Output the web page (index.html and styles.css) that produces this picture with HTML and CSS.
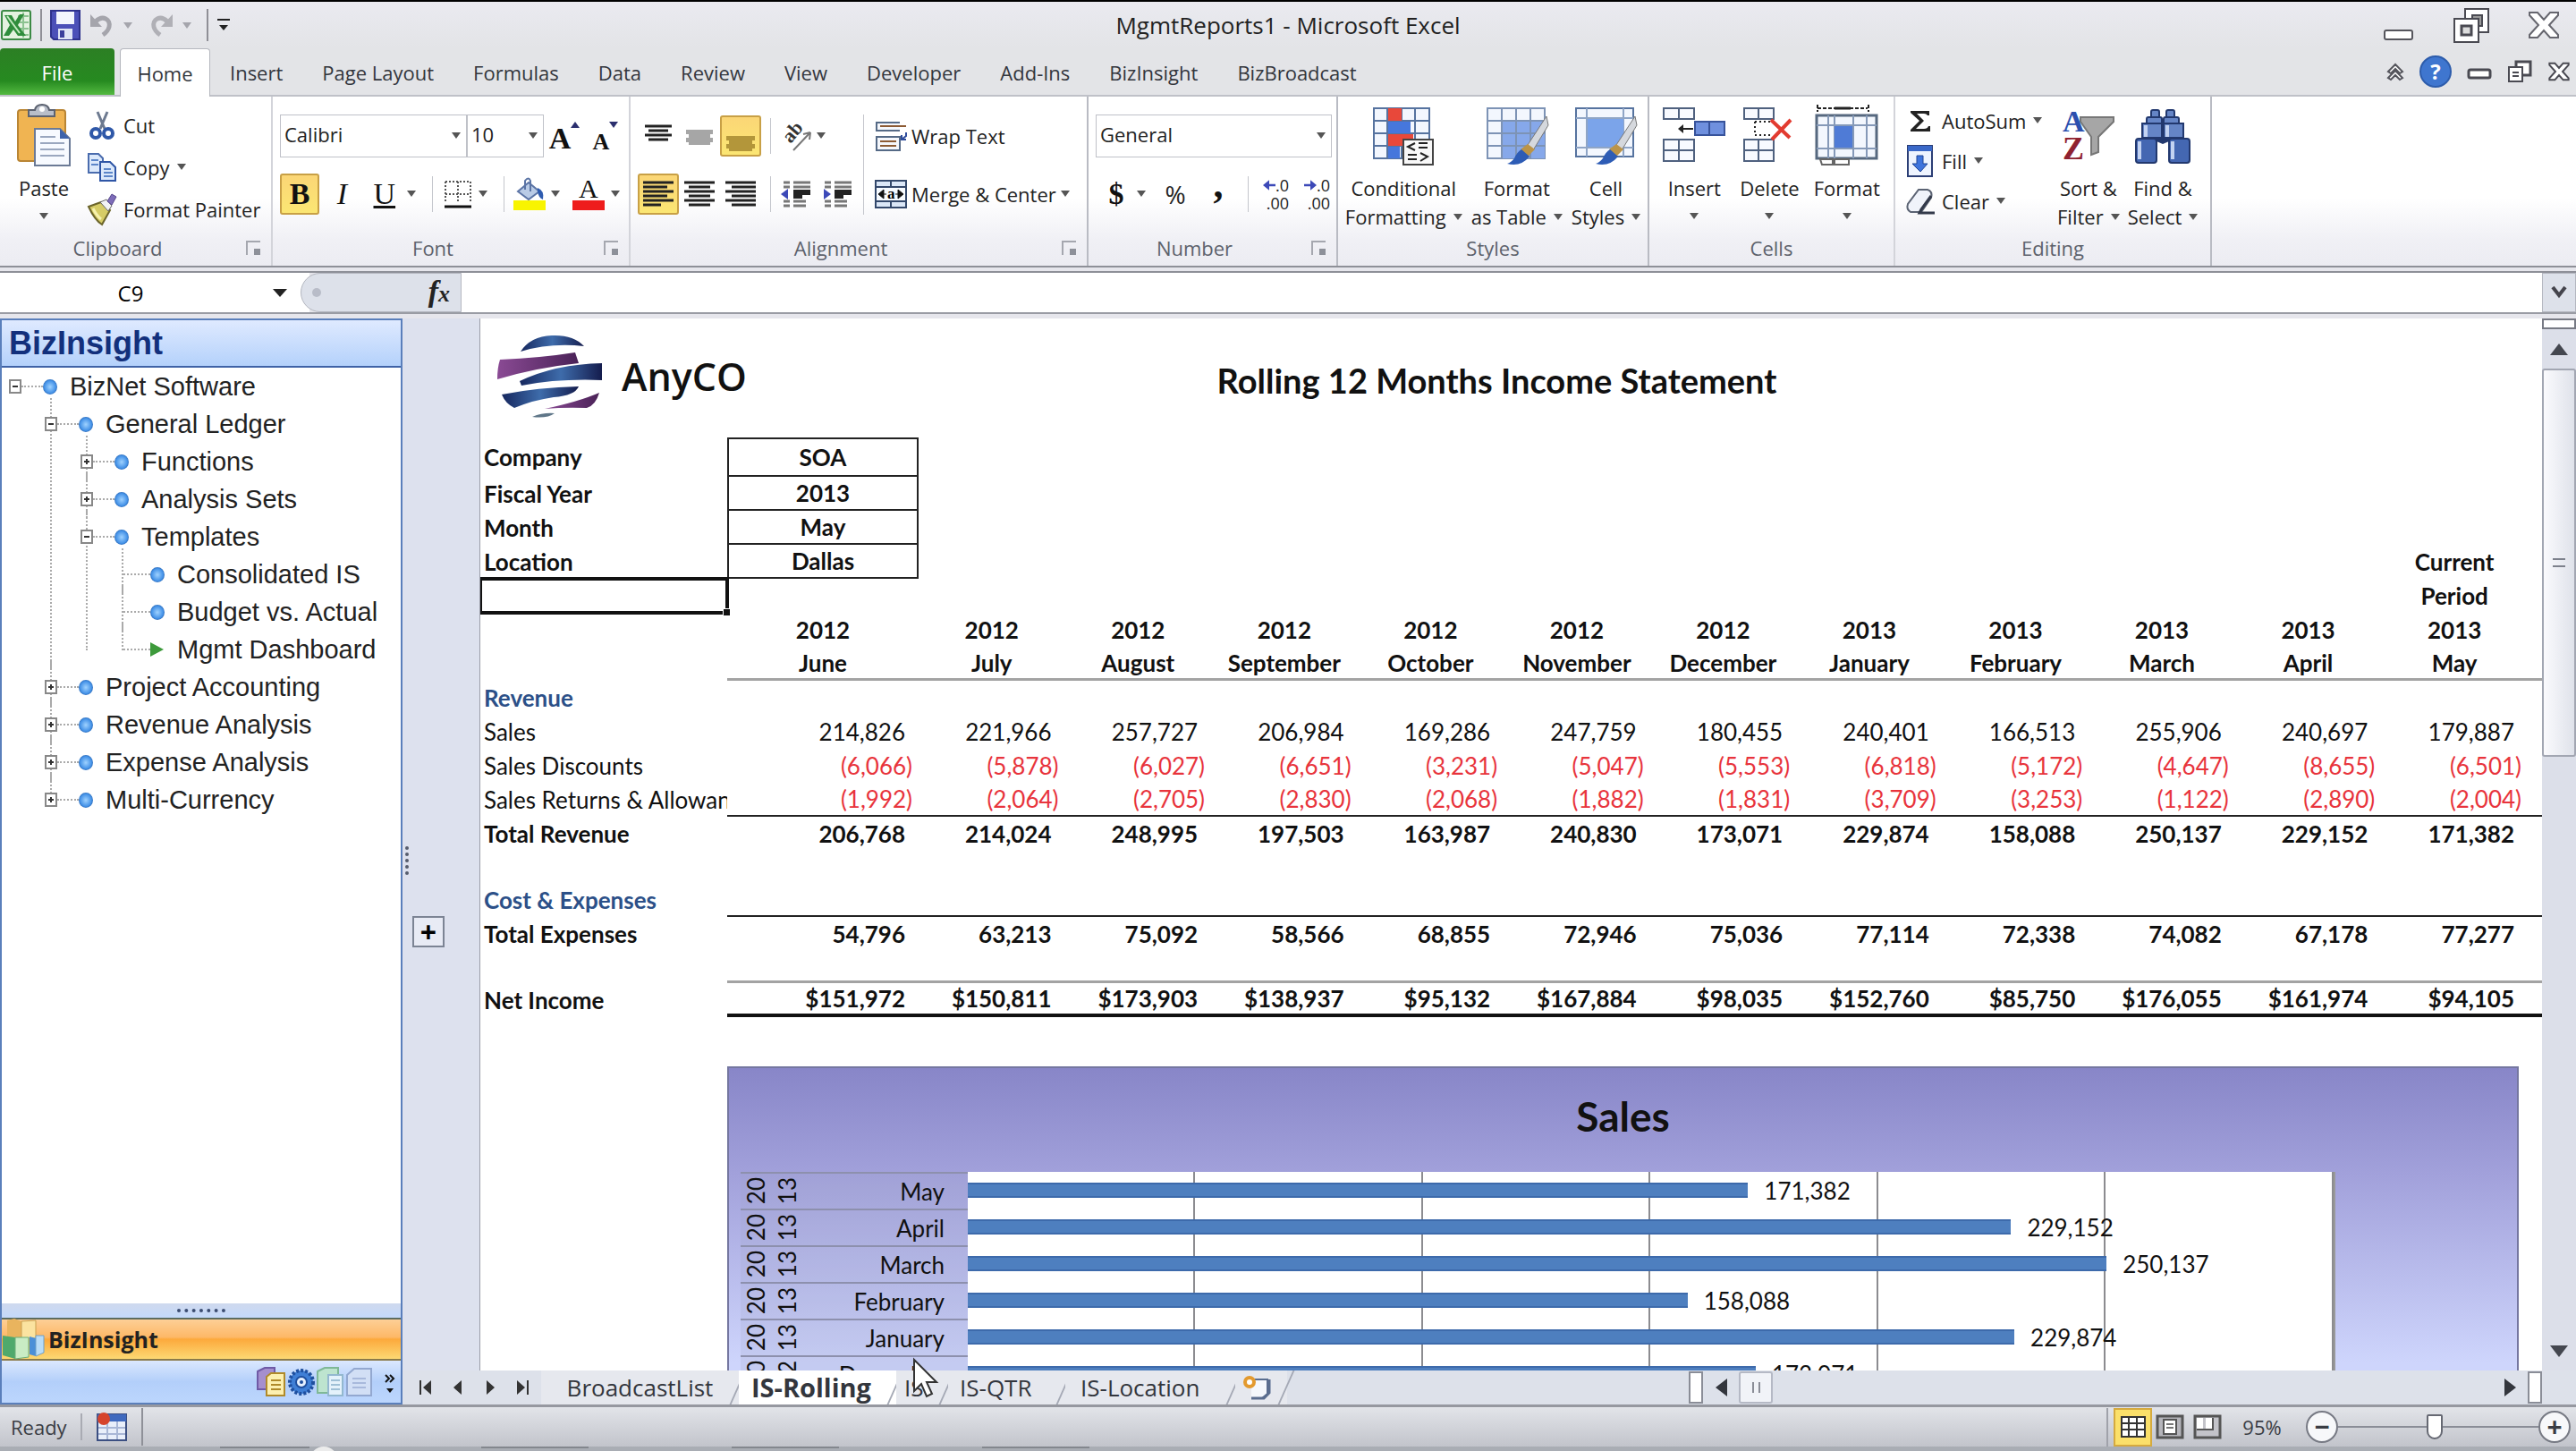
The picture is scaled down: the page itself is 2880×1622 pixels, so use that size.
FILE: index.html
```
<!DOCTYPE html>
<html lang="en">
<head>
  <meta charset="UTF-8">
  <meta name="viewport" content="width=device-width, initial-scale=1.0">
  <title>MgmtReports1 - Microsoft Excel</title>
  <link rel="stylesheet" href="styles.css">
</head>
<body>
  <!-- Title bar -->
  <header class="title-bar">
    <div class="quick-access">
      <svg width="36" height="36" viewBox="0 0 36 36"><rect x="2" y="2" width="32" height="32" rx="2" fill="#e4f2e0" stroke="#3c8a45" stroke-width="2"/><path d="M20 8h12M20 15h12M20 22h12M20 29h12M26 4v28" stroke="#8cc290" stroke-width="2"/><path d="M5 7h8l4 7 5-8h5l-7 12 9 12h-9l-5-7-5 7H4l7-12z" fill="#2f8d3c"/><path d="M8 8l14 19" stroke="#c5ebc2" stroke-width="2"/></svg>
      <i class="qa-sep"></i>
      <button aria-label="Save"><svg width="34" height="34" viewBox="0 0 34 34"><path d="M1 1h32v32H4l-3-3z" fill="#4b50b8" stroke="#2d318c" stroke-width="2"/><rect x="7" y="2" width="20" height="14" fill="#f2f5fd"/><rect x="9" y="21" width="16" height="12" fill="#dfe5f5"/><rect x="11" y="23" width="5" height="8" fill="#3b409c"/></svg></button>
      <button aria-label="Undo"><svg width="30" height="30" viewBox="0 0 30 30"><path d="M8 11c8-8 17-2 15 6-1 4-4 7-7 9" fill="none" stroke="#a5a5ac" stroke-width="5"/><path d="M2 3v14h13z" fill="#a5a5ac"/></svg></button>
      <i class="caret pale"></i>
      <button aria-label="Redo"><svg width="30" height="30" viewBox="0 0 30 30"><path d="M22 11c-8-8-17-2-15 6 1 4 4 7 7 9" fill="none" stroke="#b0b0b6" stroke-width="5"/><path d="M28 3v14H15z" fill="#b0b0b6"/></svg></button>
      <i class="caret pale"></i>
      <i class="qa-sep"></i>
      <button aria-label="Customize"><svg width="16" height="16" viewBox="0 0 16 16"><path d="M1 2h14" stroke="#222" stroke-width="2"/><path d="M3 8h10l-5 6z" fill="#222"/></svg></button>
    </div>
    <h1>MgmtReports1 - Microsoft Excel</h1>
    <div class="window-buttons">
      <button aria-label="Minimize"><svg width="36" height="40" viewBox="0 0 36 40"><rect x="2" y="26" width="31" height="10" rx="2" fill="#fff" stroke="#55555c" stroke-width="2"/></svg></button>
      <button aria-label="Restore"><svg width="42" height="42" viewBox="0 0 42 42"><rect x="14" y="3" width="26" height="26" fill="#fff" stroke="#4a4a52" stroke-width="2"/><rect x="22" y="10" width="11" height="12" fill="#999" stroke="#4a4a52" stroke-width="2"/><rect x="2" y="14" width="27" height="26" fill="#fff" stroke="#4a4a52" stroke-width="2"/><rect x="10" y="22" width="11" height="10" fill="#ddd" stroke="#4a4a52" stroke-width="3"/></svg></button>
      <button aria-label="Close"><svg width="36" height="36" viewBox="0 0 36 36"><path d="M2 4h9l7 8 7-8h9v3l-10 11 10 11v3h-9l-7-8-7 8H2v-3l10-11L2 7z" fill="#fff" stroke="#66666e" stroke-width="2"/></svg></button>
    </div>
  </header>

  <!-- Ribbon tabs -->
  <nav class="ribbon-tabs">
    <a href="#" class="file">File</a>
    <a href="#" class="active">Home</a>
    <a href="#">Insert</a>
    <a href="#">Page Layout</a>
    <a href="#">Formulas</a>
    <a href="#">Data</a>
    <a href="#">Review</a>
    <a href="#">View</a>
    <a href="#">Developer</a>
    <a href="#">Add-Ins</a>
    <a href="#">BizInsight</a>
    <a href="#">BizBroadcast</a>
    <div class="book-buttons">
      <button aria-label="Minimize ribbon"><svg width="20" height="20" viewBox="0 0 20 20"><path d="M2 10l8-8 8 8-3 2-5-5-5 5zM2 17l8-8 8 8-3 2-5-5-5 5z" fill="#fff" stroke="#55555c" stroke-width="2"/></svg></button>
      <button aria-label="Help" class="help">?</button>
      <button aria-label="Minimize window"><svg width="28" height="20" viewBox="0 0 28 20"><rect x="2" y="8" width="24" height="9" rx="2" fill="#fff" stroke="#4a4a52" stroke-width="3"/></svg></button>
      <button aria-label="Restore window"><svg width="28" height="26" viewBox="0 0 28 26"><rect x="10" y="2" width="16" height="15" fill="#fff" stroke="#4a4a52" stroke-width="3"/><rect x="2" y="8" width="15" height="16" fill="#fff" stroke="#4a4a52" stroke-width="2"/><path d="M6 14h7M6 18h7" stroke="#4a4a52" stroke-width="2"/></svg></button>
      <button aria-label="Close window"><svg width="26" height="24" viewBox="0 0 36 36"><path d="M2 4h9l7 8 7-8h9v3l-10 11 10 11v3h-9l-7-8-7 8H2v-3l10-11L2 7z" fill="#fff" stroke="#4a4a52" stroke-width="3"/></svg></button>
    </div>
  </nav>

  <!-- Ribbon -->
  <section class="ribbon">
    <div class="group clipboard">
      <div class="group-body">
        <button class="big">
          <svg width="62" height="70" viewBox="0 0 62 70"><rect x="2" y="7" width="53" height="57" rx="3" fill="#f0b452" stroke="#b98534" stroke-width="2"/><path d="M14 14V7h7q1-6 8-6t8 6h6v7z" fill="#b9bec9" stroke="#5c6270" stroke-width="2"/><circle cx="29" cy="6" r="3" fill="#fff"/><path d="M21 28h28l11 11v30H21z" fill="#f7faff" stroke="#6b7a96" stroke-width="2"/><path d="M49 28v11h11z" fill="#3e63ab"/><path d="M27 37h17M27 44h27M27 51h27M27 58h27" stroke="#9aa7bf" stroke-width="2"/></svg>
          <span>Paste</span>
          <i class="caret"></i>
        </button>
        <div class="stack">
          <button><svg width="32" height="32" viewBox="0 0 32 32"><path d="M11 1l8 19M22 1l-8 19" stroke="#6d7a90" stroke-width="3"/><circle cx="9" cy="25" r="5" fill="none" stroke="#2f58a8" stroke-width="4"/><circle cx="23" cy="25" r="5" fill="none" stroke="#2f58a8" stroke-width="4"/></svg>Cut</button>
          <button><svg width="32" height="32" viewBox="0 0 32 32"><path d="M1 1h11l5 5v16H1z" fill="#dce9fb" stroke="#4a6cae" stroke-width="2"/><path d="M14 10h11l6 6v15H14z" fill="#dce9fb" stroke="#2f56a6" stroke-width="2"/><path d="M4 8h8M4 13h8M18 18h8M18 22h10M18 26h10" stroke="#5c86c9" stroke-width="2"/></svg>Copy<i class="caret"></i></button>
          <button><svg width="32" height="36" viewBox="0 0 32 36"><path d="M1 15l14-5 10 9-9 16Q8 30 1 15z" fill="#d6cc66" stroke="#6b642a" stroke-width="2"/><path d="M6 17q4 8 9 12" stroke="#f6f1ae" stroke-width="3" fill="none"/><path d="M14 10l7-3 6 7-4 6z" fill="#f2f2f4" stroke="#666"/><path d="M22 9l5-8 5 3-5 9z" fill="#7d6cb8" stroke="#54458c"/></svg>Format Painter</button>
        </div>
      </div>
      <footer>Clipboard<i class="launcher"></i></footer>
    </div>

    <div class="group font">
      <div class="group-body rows">
        <div class="row">
          <label class="combo name"><select aria-label="Font"><option>Calibri</option></select><i class="caret"></i></label>
          <label class="combo size"><select aria-label="Font size"><option>10</option></select><i class="caret"></i></label>
          <button class="tool serif grow" aria-label="Increase font size">A<i class="up"></i></button>
          <button class="tool serif shrink" aria-label="Decrease font size">A<i class="down"></i></button>
        </div>
        <div class="row">
          <button class="tool serif on"><b>B</b></button>
          <button class="tool serif"><em>I</em></button>
          <button class="tool serif"><u>U</u></button>
          <i class="caret"></i>
          <i class="sep"></i>
          <button class="tool" aria-label="Borders"><svg width="32" height="32" viewBox="0 0 32 32"><path d="M2 2h28M2 16h28M2 2v24M16 2v24M30 2v24" stroke="#555" stroke-width="2" stroke-dasharray="2 2"/><path d="M1 30h30" stroke="#111" stroke-width="3"/></svg></button>
          <i class="caret"></i>
          <i class="sep"></i>
          <button class="tool" aria-label="Fill color"><svg width="38" height="38" viewBox="0 0 38 38"><path d="M6 16L18 6l12 10-12 9z" fill="#b9cbe6" stroke="#5b74a5" stroke-width="2"/><path d="M14 14V4q4-5 6 0v12" fill="none" stroke="#5b74a5" stroke-width="2"/><path d="M28 12q8 3 6 13-5-2-6-9z" fill="#2f5cb0"/><rect x="1" y="26" width="36" height="11" fill="#f8f400"/></svg></button>
          <i class="caret"></i>
          <button class="tool fontcolor serif" aria-label="Font color">A<i class="red"></i></button>
          <i class="caret"></i>
        </div>
      </div>
      <footer>Font<i class="launcher"></i></footer>
    </div>

    <div class="group align">
      <div class="group-body">
        <div class="rows">
          <div class="row">
            <button class="tool" aria-label="Top align"><svg width="32" height="32" viewBox="0 0 32 32"><path d="M1 5h30M5 10h22M1 15h30M5 20h22" stroke="#222" stroke-width="3"/></svg></button>
            <button class="tool" aria-label="Middle align"><svg width="32" height="32" viewBox="0 0 32 32"><path d="M1 9h30v5h-3v4h3v5H28v3H4v-3H1v-5h3v-4H1z" fill="#a6a6a6"/></svg></button>
            <button class="tool on" aria-label="Bottom align"><svg width="34" height="36" viewBox="0 0 34 36"><path d="M1 18h32v5h-3v4h3v5h-3v3H4v-3H1v-5h3v-4H1z" fill="#b3963a"/></svg></button>
            <i class="sep"></i>
            <button class="tool" aria-label="Orientation"><svg width="36" height="34" viewBox="0 0 36 34"><text transform="translate(12 26) rotate(-50)" font-family="Liberation Serif" font-weight="bold" font-size="22" fill="#333">ab</text><path d="M15 33L34 13M34 13l-8 2M34 13l-1 8" stroke="#777" stroke-width="2" fill="none"/></svg></button>
            <i class="caret"></i>
          </div>
          <div class="row">
            <button class="tool on" aria-label="Align left"><svg width="34" height="32" viewBox="0 0 34 32"><path d="M0 3h34M0 8h27M0 13h34M0 18h27M0 23h34M0 28h20" stroke="#222" stroke-width="3"/></svg></button>
            <button class="tool" aria-label="Center"><svg width="34" height="32" viewBox="0 0 34 32"><path d="M0 3h34M5 8h24M0 13h34M5 18h24M0 23h34M5 28h24" stroke="#222" stroke-width="3"/></svg></button>
            <button class="tool" aria-label="Align right"><svg width="34" height="32" viewBox="0 0 34 32"><path d="M0 3h34M7 8h27M0 13h34M7 18h27M0 23h34M7 28h27" stroke="#222" stroke-width="3"/></svg></button>
            <i class="sep"></i>
            <button class="tool" aria-label="Decrease indent"><svg width="34" height="32" viewBox="0 0 34 32"><path d="M3 3h7M14 3h19M3 8h7M14 8h19M3 24h7M3 29h7M14 24h14M14 29h14" stroke="#777" stroke-width="3"/><path d="M14 11h19v6H24v4H14z" fill="#222"/><path d="M0 16l8-6v12z" fill="#3c49b8"/></svg></button>
            <button class="tool" aria-label="Increase indent"><svg width="34" height="32" viewBox="0 0 34 32"><path d="M3 3h7M14 3h19M3 8h7M14 8h19M3 24h7M3 29h7M14 24h14M14 29h14" stroke="#777" stroke-width="3"/><path d="M14 11h19v6H24v4H14z" fill="#222"/><path d="M10 16l-8-6v12z" fill="#3c49b8"/></svg></button>
          </div>
        </div>
        <i class="sep tall"></i>
        <div class="rows wide">
          <button class="row"><svg width="36" height="36" viewBox="0 0 36 36"><path d="M28 3H2v9h26M2 19h26v15H2z" fill="#f5f7fb" stroke="#556a86" stroke-width="2"/><path d="M6 7h29M6 24h18M6 29h18" stroke="#8c5a33" stroke-width="2"/><path d="M35 14v4l-5 4M30 17v5h5" stroke="#2f4d9c" stroke-width="2" fill="none"/></svg>Wrap Text</button>
          <button class="row"><svg width="36" height="32" viewBox="0 0 36 32"><rect x="1" y="1" width="34" height="30" fill="#dbe7f7" stroke="#33486b" stroke-width="2"/><path d="M1 8h34M1 24h34M18 1v7M18 24v7" stroke="#33486b" stroke-width="2"/><rect x="2" y="9" width="32" height="14" fill="#f7fbff"/><path d="M4 16l6-5v10zM32 16l-6-5v10zM9 16h4M23 16h4" fill="#111" stroke="#111"/><text x="14" y="21" font-family="Liberation Serif" font-weight="bold" font-size="17">a</text></svg>Merge &amp; Center<i class="caret"></i></button>
        </div>
      </div>
      <footer>Alignment<i class="launcher"></i></footer>
    </div>

    <div class="group number">
      <div class="group-body rows">
        <div class="row">
          <label class="combo format"><select aria-label="Number format"><option>General</option></select><i class="caret"></i></label>
        </div>
        <div class="row">
          <button class="tool serif"><b>$</b></button>
          <i class="caret"></i>
          <button class="tool pct">%</button>
          <button class="tool serif comma"><b>,</b></button>
          <i class="sep"></i>
          <button class="tool decimals"><span><svg width="14" height="14" viewBox="0 0 12 12"><path d="M0 6l6-5v4h6v2H6v4z" fill="#3c49b8"/></svg>.0</span><span>.00</span></button>
          <button class="tool decimals"><span><svg width="14" height="14" viewBox="0 0 12 12"><path d="M12 6L6 1v4H0v2h6v4z" fill="#3c49b8"/></svg>.0</span><span>.00</span></button>
        </div>
      </div>
      <footer>Number<i class="launcher"></i></footer>
    </div>

    <div class="group styles">
      <div class="group-body">
        <button class="big">
          <svg width="70" height="70" viewBox="0 0 70 70"><rect x="2" y="5" width="62" height="56" fill="#f3f7fe" stroke="#56739f" stroke-width="2"/><path d="M2 19h62M2 33h62M2 47h62M17 5v56M33 5v56M48 5v56" stroke="#56739f" stroke-width="2"/><path d="M18 5h15v14H18zM18 34h28v13H18z" fill="#e8483a"/><path d="M18 20h25v13H18zM18 48h13v13H18z" fill="#4677dc"/><rect x="35" y="40" width="33" height="28" fill="#f8f8f8" stroke="#444" stroke-width="2"/><path d="M48 44l-8 4 8 4M52 44h10M52 49h10M40 57h10M40 62h10M54 55l8 4-8 5" fill="none" stroke="#222" stroke-width="2"/></svg>
          <span>Conditional</span><span>Formatting<i class="caret"></i></span>
        </button>
        <button class="big">
          <svg width="70" height="70" viewBox="0 0 70 70"><rect x="2" y="5" width="64" height="56" fill="#f3f7fe" stroke="#7d93b5" stroke-width="2"/><rect x="18" y="19" width="48" height="42" fill="#86a8ea"/><path d="M2 19h64M2 33h64M2 47h64M18 5v56M34 5v56M50 5v56" stroke="#7d93b5" stroke-width="2"/><path d="M68 14L47 46l6 6 17-28z" fill="#d5d8dd" stroke="#777"/><path d="M47 45l-8 6 8 8 8-8z" fill="#bb9448"/><path d="M40 51q-5 3-8 10-4 5-8 6 15 4 25-8z" fill="#2d5cb5"/></svg>
          <span>Format</span><span>as Table<i class="caret"></i></span>
        </button>
        <button class="big">
          <svg width="70" height="70" viewBox="0 0 70 70"><rect x="2" y="5" width="64" height="54" fill="#f3f7fe" stroke="#56739f" stroke-width="2"/><path d="M2 16h64M14 5v54M55 5v54M2 49h64" stroke="#8fa5c6" stroke-width="2"/><rect x="15" y="17" width="40" height="31" fill="#7ba4ea"/><path d="M68 14L47 46l6 6 17-28z" fill="#d5d8dd" stroke="#777"/><path d="M47 45l-8 6 8 8 8-8z" fill="#bb9448"/><path d="M40 51q-5 3-8 10-4 5-8 6 15 4 25-8z" fill="#2d5cb5"/></svg>
          <span>Cell</span><span>Styles<i class="caret"></i></span>
        </button>
      </div>
      <footer>Styles</footer>
    </div>

    <div class="group cells">
      <div class="group-body">
        <button class="big">
          <svg width="70" height="70" viewBox="0 0 70 70"><path d="M1 5h34v12H1zM18 5v12M1 40h34v24H1zM1 52h34M18 40v24" fill="#f8faff" stroke="#4f617f" stroke-width="2"/><rect x="36" y="20" width="33" height="15" fill="#6f90de" stroke="#37539b" stroke-width="2"/><path d="M52 20v15" stroke="#37539b" stroke-width="2"/><path d="M20 28h14" stroke="#222" stroke-width="2"/><path d="M17 28l6-5v10z" fill="#222"/></svg>
          <span>Insert</span><i class="caret"></i>
        </button>
        <button class="big">
          <svg width="62" height="70" viewBox="0 0 62 70"><path d="M3 5h33v12H3zM19 5v12M3 40h33v24H3zM3 52h33M19 40v24" fill="#f8faff" stroke="#4f617f" stroke-width="2"/><path d="M15 20h18M15 35h18M15 20v15" stroke="#222" stroke-width="2" stroke-dasharray="2 3"/><path d="M33 18l21 20M55 18L34 40" stroke="#e23b30" stroke-width="4"/></svg>
          <span>Delete</span><i class="caret"></i>
        </button>
        <button class="big">
          <svg width="72" height="70" viewBox="0 0 72 70"><path d="M3 1v8M60 1v8M3 5h56" stroke="#222" stroke-width="2" stroke-dasharray="4 2"/><path d="M22 5h18" stroke="#222" stroke-width="3"/><rect x="2" y="13" width="67" height="48" fill="#f3f7fe" stroke="#56687f" stroke-width="3"/><path d="M2 24h67M2 50h67M15 13v48M43 13v48M58 13v48M22 13v48" stroke="#8599b8" stroke-width="2"/><rect x="22" y="25" width="20" height="24" fill="#4f7bd6"/><path d="M6 62h14v6H8zM22 62h16v6H22z" fill="#fff" stroke="#666" stroke-width="2"/></svg>
          <span>Format</span><i class="caret"></i>
        </button>
      </div>
      <footer>Cells</footer>
    </div>

    <div class="group editing">
      <div class="group-body">
        <div class="stack">
          <button><svg width="32" height="32" viewBox="0 0 32 32"><path d="M5 5h21v5h-2q-1-2-4-2h-8l8 8-9 9h9q4 0 5-3h2v6H5v-2l10-10L5 7z" fill="#222"/></svg>AutoSum<i class="caret"></i></button>
          <button><svg width="32" height="36" viewBox="0 0 32 36"><rect x="2" y="1" width="27" height="34" fill="#eef4ff" stroke="#2b3e75" stroke-width="2"/><rect x="2" y="1" width="27" height="6" fill="#3a68c8"/><path d="M12 12h7v9h5l-8 9-9-9h5z" fill="#3e74dc" stroke="#1f4495"/></svg>Fill<i class="caret"></i></button>
          <button><svg width="32" height="30" viewBox="0 0 32 30"><path d="M14 2h10q6 2 4 9L17 27H5q-5-3-3-9z" fill="#f0f3fa" stroke="#5b6373" stroke-width="2"/><path d="M28 9L17 24l-2 4h17" fill="none" stroke="#333a4a" stroke-width="3"/></svg>Clear<i class="caret"></i></button>
        </div>
        <button class="big">
          <svg width="62" height="70" viewBox="0 0 62 70"><path d="M22 15h37v5L42 37v17l-8 3V37L22 20z" fill="#a6a6a6" stroke="#777" stroke-width="2"/><text x="2" y="31" font-family="Liberation Serif" font-weight="bold" font-size="34" fill="#2b4fae">A</text><text x="2" y="62" font-family="Liberation Serif" font-weight="bold" font-size="36" fill="#8f2230">Z</text></svg>
          <span>Sort &amp;</span><span>Filter<i class="caret"></i></span>
        </button>
        <button class="big">
          <svg width="64" height="70" viewBox="0 0 64 70"><g stroke="#22386e" stroke-width="2" fill="#6585c6"><rect x="19" y="7" width="9" height="9" rx="2"/><rect x="36" y="7" width="9" height="9" rx="2"/><rect x="14" y="15" width="17" height="8" rx="2"/><rect x="33" y="15" width="17" height="8" rx="2"/><rect x="9" y="22" width="22" height="16"/><rect x="33" y="22" width="22" height="16"/><rect x="2" y="39" width="23" height="27" rx="3" fill="#4467b2"/><rect x="39" y="39" width="23" height="27" rx="3" fill="#4467b2"/></g><path d="M25 38h14v4l-7 3-7-3z" fill="#22386e"/><path d="M6 42v20M43 42v20M13 24v13M37 24v13" stroke="#c3d3f2" stroke-width="4"/></svg>
          <span>Find &amp;</span><span>Select<i class="caret"></i></span>
        </button>
      </div>
      <footer>Editing</footer>
    </div>
  </section>

  <!-- Formula bar -->
  <section class="formula-bar">
    <input class="name-box" type="text" value="C9" aria-label="Name box">
    <button class="name-drop" aria-label="Names"><i class="caret dark"></i></button>
    <div class="fx"><i class="knob"></i><span>f<small>x</small></span></div>
    <input class="formula" type="text" aria-label="Formula">
    <button class="expand" aria-label="Expand formula bar"><svg width="18" height="18" viewBox="0 0 18 18"><path d="M2 3l7 9 7-9" fill="none" stroke="#44444c" stroke-width="4"/></svg></button>
  </section>

  <main class="workspace">
    <!-- BizInsight task pane -->
    <aside class="pane">
      <h2>BizInsight</h2>
      <ul class="tree">
        <li><div class="node open"><i class="box"></i><i class="dash"></i><i class="dot"></i>BizNet Software</div>
          <ul>
            <li><div class="node open"><i class="box"></i><i class="dash"></i><i class="dot"></i>General Ledger</div>
              <ul>
                <li><div class="node"><i class="box"></i><i class="dash"></i><i class="dot"></i>Functions</div></li>
                <li><div class="node"><i class="box"></i><i class="dash"></i><i class="dot"></i>Analysis Sets</div></li>
                <li><div class="node open"><i class="box"></i><i class="dash"></i><i class="dot"></i>Templates</div>
                  <ul>
                    <li><div class="node leaf"><i class="dash"></i><i class="dot"></i>Consolidated IS</div></li>
                    <li><div class="node leaf"><i class="dash"></i><i class="dot"></i>Budget vs. Actual</div></li>
                    <li><div class="node leaf"><i class="dash"></i><i class="play"></i>Mgmt Dashboard</div></li>
                  </ul>
                </li>
              </ul>
            </li>
            <li><div class="node"><i class="box"></i><i class="dash"></i><i class="dot"></i>Project Accounting</div></li>
            <li><div class="node"><i class="box"></i><i class="dash"></i><i class="dot"></i>Revenue Analysis</div></li>
            <li><div class="node"><i class="box"></i><i class="dash"></i><i class="dot"></i>Expense Analysis</div></li>
            <li><div class="node"><i class="box"></i><i class="dash"></i><i class="dot"></i>Multi-Currency</div></li>
          </ul>
        </li>
      </ul>
      <div class="splitter"><i></i></div>
      <button class="pane-tab"><svg width="48" height="46" viewBox="0 0 48 46"><path d="M6 2l8-2 8 3v18H6z" fill="#e9b45e"/><path d="M22 3l16-1v20H22z" fill="#fbe3a0" stroke="#c9a050"/><path d="M1 19l14 2v24L1 41z" fill="#4fa96c"/><path d="M15 21h15v22l-15 2z" fill="#c9ecc4" stroke="#6bae78"/><path d="M31 20l7 2v20l-7-2z" fill="#4b8fd8"/><path d="M38 19h9v19l-9 4z" fill="#b9dcf8" stroke="#6f9fc8"/></svg>BizInsight</button>
      <div class="pane-icons">
        <svg width="34" height="34" viewBox="0 0 34 34"><path d="M2 5l8-4h11v24H2z" fill="#a58fce" stroke="#6f5aa6" stroke-width="2"/><path d="M12 11l5-4h15v25H12z" fill="#fdf0b0" stroke="#b08a2a" stroke-width="2"/><path d="M17 15h11M17 20h11M17 25h11" stroke="#b08a2a" stroke-width="2"/></svg>
        <svg width="32" height="32" viewBox="0 0 32 32"><circle cx="16" cy="16" r="13" fill="#3f7fd6" stroke="#1f4f9e" stroke-width="4" stroke-dasharray="3 2"/><circle cx="16" cy="16" r="6" fill="#e7f1ff" stroke="#1f4f9e" stroke-width="2"/><circle cx="16" cy="16" r="2" fill="#1f4f9e"/></svg>
        <svg width="32" height="34" viewBox="0 0 32 34"><path d="M1 5l8-4h15v28H1z" fill="#bde4cf" stroke="#7fb897" stroke-width="2"/><path d="M13 9h16v23H13z" fill="#e4f2fb" stroke="#93b8cf" stroke-width="2"/><path d="M16 15h10M16 20h10M16 25h10" stroke="#9fc0d6" stroke-width="2"/></svg>
        <svg width="30" height="34" viewBox="0 0 30 34"><path d="M1 9l8-7h19v30H1z" fill="#d2dff5" stroke="#93a8d0" stroke-width="2"/><path d="M7 13h15M7 18h15M7 23h15" stroke="#a8b9dc" stroke-width="2"/></svg>
        <svg class="more" width="12" height="34" viewBox="0 0 12 34"><path d="M1 9l4 4-4 4M6 9l4 4-4 4" fill="none" stroke="#111" stroke-width="2"/><path d="M2 24h8l-4 5z" fill="#111"/></svg>
      </div>
    </aside>

    <section class="book">
      <div class="view">
        <div class="outline"><i class="grip"></i><button aria-label="Show detail">+</button></div>
        <div class="sheet">
          <header class="report-head">
            <div class="brand">
              <svg width="120" height="96" viewBox="0 0 120 96"><defs><linearGradient id="blue"><stop offset="0" stop-color="#16275e"/><stop offset=".5" stop-color="#3e6cab"/><stop offset="1" stop-color="#141c4d"/></linearGradient><linearGradient id="plum"><stop offset="0" stop-color="#8a4a94"/><stop offset="1" stop-color="#4a2257"/></linearGradient></defs><path d="M27 20Q38 3 62 2 86 1 98 14 60 10 27 20z" fill="url(#blue)"/><path d="M4 29Q50 27 88 21l4 12Q44 38 1 51 1 38 4 29z" fill="url(#plum)"/><path d="M26 53q40-19 92-20v19Q70 50 28 58z" fill="url(#blue)"/><path d="M6 68q40-8 86-9-4 10-28 12-22 3-44 12Q10 78 6 68z" fill="url(#blue)"/><path d="M54 84q38-8 61-18-4 14-14 17-24-1-47 1z" fill="url(#plum)"/><path d="M40 93q12-5 25-4-8 6-25 4z" fill="#5f7688"/></svg>
              <strong>AnyCO</strong>
            </div>
            <h3>Rolling 12 Months Income Statement</h3>
          </header>
          <table class="report">
            <colgroup><col class="c-label"><col class="c-first"><col span="11"><col class="c-end"></colgroup>
            <tbody id="reportRows"></tbody>
          </table>
          <div class="chart">
            <h3>Sales</h3>
            <div class="plot-wrap">
              <div class="cats" id="cats"></div>
              <div class="plot" id="plot"></div>
            </div>
          </div>
        </div>
        <div class="vscroll">
          <i class="vsplit"></i>
          <button aria-label="Scroll up"><i class="tri up"></i></button>
          <div class="vtrack"><div class="vthumb"><i></i></div></div>
          <button aria-label="Scroll down"><i class="tri down"></i></button>
        </div>
      </div>

      <!-- Sheet tabs -->
      <div class="tab-row">
        <div class="tab-nav">
          <button aria-label="First sheet"><svg width="16" height="18" viewBox="0 0 16 18"><path d="M2 1v16" stroke="#333" stroke-width="2"/><path d="M14 1v16L5 9z" fill="#333"/></svg></button>
          <button aria-label="Previous sheet"><svg width="16" height="18" viewBox="0 0 16 18"><path d="M12 1v16L3 9z" fill="#333"/></svg></button>
          <button aria-label="Next sheet"><svg width="16" height="18" viewBox="0 0 16 18"><path d="M4 1v16l9-8z" fill="#333"/></svg></button>
          <button aria-label="Last sheet"><svg width="16" height="18" viewBox="0 0 16 18"><path d="M14 1v16" stroke="#333" stroke-width="2"/><path d="M2 1v16l9-8z" fill="#333"/></svg></button>
        </div>
        <div class="sheet-tabs">
          <button class="broadcast">BroadcastList</button>
          <button class="active">IS-Rolling</button>
          <button class="short">IS
            <svg class="pointer" width="30" height="46" viewBox="0 0 30 46"><path d="M2 2v35l8-8 6 14 6-3-6-13h11z" fill="#fff" stroke="#333" stroke-width="2"/></svg>
          </button>
          <button class="qtr">IS-QTR</button>
          <button class="location">IS-Location</button>
          <button class="new" aria-label="Insert worksheet"><svg width="34" height="30" viewBox="0 0 34 30"><path d="M10 6h18v16l-6 5H10" fill="#f4f7fc" stroke="#5a6d8f" stroke-width="2"/><path d="M10 27h14l6-6V6" fill="none" stroke="#5a6d8f" stroke-width="3"/><circle cx="8" cy="9" r="5" fill="#fff" stroke="#e39a2f" stroke-width="4"/></svg></button>
        </div>
        <div class="hscroll">
          <i class="hsplit"></i>
          <button aria-label="Scroll left"><i class="tri left"></i></button>
          <div class="htrack"><div class="hthumb"><i></i></div></div>
          <button aria-label="Scroll right"><i class="tri right"></i></button>
          <i class="hsplit"></i>
        </div>
      </div>
    </section>
  </main>

  <!-- Status bar -->
  <footer class="status">
    <span class="ready">Ready</span>
    <button class="macro" aria-label="Record macro"><svg width="36" height="32" viewBox="0 0 36 32"><rect x="2" y="2" width="32" height="29" fill="#e9effa" stroke="#3b4f82" stroke-width="2"/><rect x="2" y="2" width="32" height="8" fill="#3f69be"/><path d="M13 10v20M24 10v20M3 17h30M3 24h30" stroke="#a9b7d6" stroke-width="2"/><circle cx="9" cy="7" r="7" fill="#d6442c"/></svg></button>
    <div class="views">
      <button class="on" aria-label="Normal"><svg width="28" height="24" viewBox="0 0 28 24"><rect x="1" y="1" width="26" height="22" fill="#fff" stroke="#333" stroke-width="2"/><path d="M1 8h26M1 15h26M9 1v22M18 1v22" stroke="#333" stroke-width="2"/></svg></button>
      <button aria-label="Page layout"><svg width="32" height="28" viewBox="0 0 32 28"><rect x="2" y="2" width="28" height="24" fill="#b5b5bb" stroke="#555" stroke-width="3"/><rect x="9" y="6" width="14" height="16" fill="#fff" stroke="#555" stroke-width="2"/><path d="M12 11h8M12 15h8" stroke="#777" stroke-width="2"/></svg></button>
      <button aria-label="Page break preview"><svg width="32" height="28" viewBox="0 0 32 28"><rect x="2" y="2" width="28" height="24" fill="#c3c3c9" stroke="#555" stroke-width="3"/><path d="M4 4h7v12H4zM14 4h7v12h-7z" fill="#fff"/><path d="M4 17h18V4" fill="none" stroke="#555" stroke-width="2"/></svg></button>
    </div>
    <span class="zoom-value">95%</span>
    <button class="round" aria-label="Zoom out">−</button>
    <input type="range" min="0" max="100" value="48" aria-label="Zoom">
    <button class="round" aria-label="Zoom in">+</button>
  </footer>
  <div class="taskbar"><i></i><b></b><i></i><i></i><i></i></div>

  <script>
    const params = [['Company', 'SOA'], ['Fiscal Year', '2013'], ['Month', 'May'], ['Location', 'Dallas']];
    const months = ['June', 'July', 'August', 'September', 'October', 'November', 'December', 'January', 'February', 'March', 'April', 'May'];
    const years = months.map((m, i) => i < 7 ? 2012 : 2013);

    const lines = [
      { label: 'Revenue', cls: 'section' },
      { label: 'Sales', values: [214826, 221966, 257727, 206984, 169286, 247759, 180455, 240401, 166513, 255906, 240697, 179887] },
      { label: 'Sales Discounts', values: [-6066, -5878, -6027, -6651, -3231, -5047, -5553, -6818, -5172, -4647, -8655, -6501] },
      { label: 'Sales Returns & Allowances', cls: 'rule', values: [-1992, -2064, -2705, -2830, -2068, -1882, -1831, -3709, -3253, -1122, -2890, -2004] },
      { label: 'Total Revenue', cls: 'total', values: [206768, 214024, 248995, 197503, 163987, 240830, 173071, 229874, 158088, 250137, 229152, 171382] },
      { cls: 'blank' },
      { label: 'Cost & Expenses', cls: 'section rule' },
      { label: 'Total Expenses', cls: 'total', values: [54796, 63213, 75092, 58566, 68855, 72946, 75036, 77114, 72338, 74082, 67178, 77277] },
      { cls: 'blank grey-rule' },
      { label: 'Net Income', cls: 'total thick-rule', money: true, values: [151972, 150811, 173903, 138937, 95132, 167884, 98035, 152760, 85750, 176055, 161974, 94105] }
    ];

    function format(value, money) {
      const text = Math.abs(value).toLocaleString('en-US');
      if (value < 0) return `(${text})`;
      return money ? '$' + text : text;
    }

    function row(cls, cells) {
      return `<tr class="${cls || ''}">${cells}<td></td></tr>`;
    }

    let html = '';
    params.forEach(([name, value], i) => {
      const last = i === 3 ? '<td class="head">Current</td>' : '<td></td>';
      html += row(i === 0 ? 'param first' : 'param', `<th>${name}</th><td class="value">${value}</td><td colspan="10"></td>${last}`);
    });
    html += row('', '<td class="selected"><i></i></td><td colspan="11"></td><td class="head">Period</td>');
    html += row('', '<td></td>' + years.map(y => `<td class="head">${y}</td>`).join(''));
    html += row('grey-rule', '<td></td>' + months.map(m => `<td class="head">${m}</td>`).join(''));
    lines.forEach(line => {
      const cells = (line.values || months.map(() => null)).map(v =>
        v === null ? '<td></td>' : `<td class="num${v < 0 ? ' neg' : ''}">${format(v, line.money)}</td>`).join('');
      html += row(line.cls, `<th>${(line.label || '').replace('&', '&amp;')}</th>${cells}`);
    });
    document.getElementById('reportRows').innerHTML = html;

    // Chart, newest month on top
    const axisMax = 300000;
    const sales = lines[4].values;
    const cats = document.getElementById('cats');
    const plot = document.getElementById('plot');
    for (let i = 11; i >= 0; i--) {
      cats.innerHTML += `<div class="cat"><span class="year">${String(years[i]).slice(0, 2)}<br>${String(years[i]).slice(2)}</span><span>${months[i]}</span></div>`;
      plot.innerHTML += `<div class="bar-row"><div class="bar" style="width: ${sales[i] / axisMax * 100}%"></div><span>${format(sales[i])}</span></div>`;
    }
  </script>
</body>
</html>
```
FILE: styles.css
```
* {
  box-sizing: border-box;
}
body {
  margin: 0;
  height: 100vh;
  display: flex;
  flex-direction: column;
  overflow: hidden;
  border-top: 2px solid #000;
  background: #e2e3e7;
  color: #222;
  font-family: "Open Sans", "Noto Sans", sans-serif;
  font-size: 22px;
}
button {
  font: inherit;
  color: inherit;
  background: none;
  border: 0;
  padding: 0;
}
svg {
  display: block;
  flex: none;
  overflow: visible;
}
h1, h2, h3 {
  margin: 0;
}
.caret {
  flex: none;
  width: 0;
  border: 5px solid transparent;
  border-top: 7px solid #555;
  border-bottom: 0;
}
.caret.pale {
  border-top-color: #a5a5ac;
}
.caret.dark {
  border-width: 9px 8px 0;
  border-top-color: #222;
}

/* Title bar */
.title-bar {
  height: 52px;
  flex: none;
  display: grid;
  grid-template-columns: 1fr auto 1fr;
  align-items: center;
  background: linear-gradient(#eaeaf0, #e3e4e7);
}
.title-bar h1 {
  font-size: 26px;
  font-weight: normal;
}
.quick-access {
  display: flex;
  align-items: center;
  gap: 9px;
  height: 46px;
}
.quick-access .caret {
  margin-right: 8px;
}
.qa-sep {
  width: 2px;
  height: 36px;
  background: #8f8f96;
}
.window-buttons {
  display: flex;
  justify-content: flex-end;
  align-items: center;
  gap: 42px;
  padding-right: 18px;
}

/* Ribbon tabs */
.ribbon-tabs {
  height: 54px;
  flex: none;
  display: flex;
  background: #e3e4e7;
  border-bottom: 2px solid #bfc1c8;
}
.ribbon-tabs a {
  padding: 0 22px;
  line-height: 54px;
  color: #33363d;
  text-decoration: none;
}
.ribbon-tabs .file {
  width: 128px;
  margin-right: 6px;
  padding: 0;
  text-align: center;
  color: #fff;
  background: linear-gradient(#2c7f24, #268a20 70%, #53b940);
  border-radius: 4px 4px 0 0;
}
.ribbon-tabs .active {
  width: 101px;
  height: 54px;
  padding: 0;
  text-align: center;
  background: #fff;
  border: 1px solid #b5b7be;
  border-bottom: 0;
  border-radius: 4px 4px 0 0;
}
.book-buttons {
  margin-left: auto;
  display: flex;
  align-items: center;
  gap: 17px;
  padding-right: 6px;
}
.book-buttons .help {
  width: 36px;
  height: 36px;
  border-radius: 50%;
  background: #3f76cf;
  border: 2px solid #2d5cab;
  color: #fff;
  font-size: 24px;
  font-weight: bold;
  line-height: 30px;
}

/* Ribbon */
.ribbon {
  height: 191px;
  flex: none;
  display: flex;
  background: linear-gradient(#fff 60%, #f0f0f5 85%, #ececf2);
  border-bottom: 2px solid #8e9098;
}
.group {
  display: flex;
  flex-direction: column;
  border-right: 2px solid #d3d4da;
}
.clipboard { width: 305px; }
.font { width: 400px; }
.align { width: 512px; }
.number { width: 279px; }
.styles { width: 348px; }
.cells { width: 275px; }
.editing { width: 354px; }
.group-body {
  height: 149px;
  display: flex;
}
.group footer {
  flex: 1;
  display: flex;
  align-items: center;
  justify-content: center;
  color: #5d626c;
}
.align, .number, .styles, .editing {
  border-right-color: #b9bbc3;
}
.launcher {
  position: absolute;
  right: 12px;
  width: 16px;
  height: 16px;
  border: 2px solid #a5a7af;
  border-right: 0;
  border-bottom: 0;
  background: linear-gradient(#8d9099, #8d9099) right bottom / 7px 7px no-repeat;
}
/* room for the dialog launcher in the corner */
.clipboard footer, .font footer, .align footer, .number footer {
  position: relative;
  padding-right: 40px;
}
.big {
  display: flex;
  flex-direction: column;
  align-items: center;
  padding-top: 8px;
  white-space: nowrap;
}
.big svg {
  margin-bottom: 8px;
}
.big span {
  display: flex;
  align-items: center;
  gap: 8px;
  line-height: 32px;
}
.big > .caret {
  margin-top: 12px;
}
.clipboard .big {
  width: 98px;
}
.stack {
  display: flex;
  flex-direction: column;
  align-items: flex-start;
  padding-top: 8px;
}
.stack button {
  height: 48px;
  display: flex;
  align-items: center;
  gap: 8px;
  white-space: nowrap;
}
.editing .stack {
  width: 172px;
  padding: 4px 0 0 12px;
}
.editing .stack button {
  height: 45px;
}
.styles .group-body {
  justify-content: center;
  gap: 10px;
}
.cells .group-body {
  justify-content: center;
  gap: 16px;
}
.editing .group-body {
  gap: 9px;
}
.rows {
  display: flex;
  flex-direction: column;
  gap: 18px;
  padding: 20px 0 0 8px;
}
.row {
  height: 47px;
  display: flex;
  align-items: center;
}
.combo {
  display: grid;
  align-items: center;
  height: 48px;
}
.combo select {
  grid-area: 1 / 1;
  width: 100%;
  height: 48px;
  appearance: none;
  margin: 0;
  padding: 0 4px 4px;
  border: 1px solid #bfc1c8;
  border-radius: 0;
  background: #fff;
  font: inherit;
  color: #222;
}
.combo .caret {
  grid-area: 1 / 1;
  justify-self: end;
  margin-right: 7px;
  z-index: 1;
}
.combo.name { width: 209px; }
.combo.size { width: 86px; }
.combo.format { width: 264px; }
.tool {
  width: 46px;
  height: 46px;
  display: flex;
  align-items: center;
  justify-content: center;
  border: 1px solid transparent;
}
.tool.on {
  background: linear-gradient(#fbd676, #fbe673);
  border: 2px solid #c8a046;
  border-radius: 3px;
}
.serif {
  font-family: "Liberation Serif", serif;
  font-size: 34px;
  color: #111;
}
.font .row:nth-child(2) .tool {
  margin-right: 3px;
}
.font .row:nth-child(2) .tool + .caret {
  margin-right: 10px;
}
.font .row .sep + .tool {
  width: 42px;
}
.grow, .shrink {
  font-weight: bold;
  gap: 0;
  align-items: flex-end;
}
.grow i, .shrink i {
  align-self: flex-start;
  margin-top: 6px;
  border: 5px solid transparent;
}
.grow i {
  border-bottom: 7px solid #2b2f6e;
  border-top: 0;
}
.shrink {
  font-size: 26px;
}
.shrink i {
  border-top: 7px solid #2b2f6e;
  border-bottom: 0;
}
.fontcolor {
  flex-direction: column;
  font-size: 30px;
  line-height: 26px;
}
.fontcolor .red {
  width: 36px;
  height: 11px;
  background: #ee1c1c;
}
.sep {
  width: 1px;
  height: 40px;
  margin: 0 8px;
  background: #c4c6cc;
}
.sep.tall {
  height: 112px;
  margin: 20px 0 0;
}
.align .row .sep {
  margin: 0 5px 0 10px;
}
.align .group-body > .rows:first-child {
  width: 260px;
}
.rows.wide {
  padding-left: 12px;
}
.wide .row {
  gap: 5px;
  white-space: nowrap;
}
.number .pct {
  width: 50px;
  margin-left: 8px;
  font-size: 28px;
}
.comma {
  padding-bottom: 20px;
  font-size: 44px;
}
.number .row .sep {
  margin: 0 6px 0 10px;
}
.decimals {
  flex-direction: column;
  align-items: flex-end;
  padding-right: 6px;
  font-size: 18px;
  line-height: 20px;
}
.decimals span {
  display: flex;
  align-items: center;
}

/* Formula bar */
.formula-bar {
  height: 57px;
  flex: none;
  display: flex;
  padding: 6px 0 7px;
  background: linear-gradient(#e6e6ec 4px, #8e9098 4px, #8e9098 6px, #e6e6ec 6px, #e6e6ec 50px, #9a9ca4 50px, #9a9ca4 52px, #e6e6ec 52px);
}
.formula-bar input {
  border: 0;
  padding: 0;
  background: #fff;
  font: inherit;
  font-size: 24px;
}
.name-box {
  width: 292px;
  text-align: center;
}
.name-drop {
  width: 54px;
  display: flex;
  align-items: center;
  padding-left: 13px;
  background: #fff;
}
.fx {
  width: 180px;
  margin-left: -10px;
  padding: 0 12px;
  display: flex;
  align-items: center;
  justify-content: space-between;
  background: #dde1ea;
  border: 1px solid #b4b7c0;
  border-radius: 22px 0 0 22px;
  font: italic bold 34px/40px "Liberation Serif", serif;
}
.fx small {
  font-size: 26px;
}
.knob {
  width: 10px;
  height: 10px;
  border-radius: 50%;
  background: #b8bcc8;
}
.formula {
  flex: 1;
}
.expand {
  width: 38px;
  display: flex;
  align-items: center;
  justify-content: center;
  background: #dde1ea;
  border: 1px solid #b4b7c0;
}

/* Workspace */
.workspace {
  flex: 1;
  min-height: 0;
  display: flex;
}
.pane {
  width: 450px;
  display: flex;
  flex-direction: column;
  border: 2px solid #5a7fbb;
  background: #fff;
  font-family: "Liberation Sans", Arial, sans-serif;
}
.pane h2 {
  height: 53px;
  flex: none;
  padding-left: 8px;
  font-size: 36px;
  line-height: 52px;
  color: #13307c;
  background: linear-gradient(#dfeaff, #b4d1fb);
  border-bottom: 2px solid #3f62a6;
}
.tree, .tree ul {
  list-style: none;
  margin: 0;
  padding: 0;
}
.tree {
  flex: 1;
  padding-left: 8px;
  font-size: 29px;
  color: #222;
}
.tree ul {
  padding-left: 40px;
}
.tree ul li {
  position: relative;
}
/* dotted guide lines between siblings */
.tree ul li::before {
  content: "";
  position: absolute;
  left: 6px;
  top: -8px;
  bottom: 20px;
  border-left: 2px dotted #aaa;
}
.tree ul li:not(:last-child)::before {
  bottom: 0;
}
.node {
  height: 42px;
  display: flex;
  align-items: center;
  white-space: nowrap;
  position: relative;
}
.box {
  width: 14px;
  height: 16px;
  border: 2px solid #888;
  background: linear-gradient(#333, #333) center / 6px 2px no-repeat, linear-gradient(#333, #333) center / 2px 6px no-repeat, #fff;
}
.open > .box {
  background: linear-gradient(#333, #333) center / 6px 2px no-repeat, #fff;
}
.dash {
  width: 24px;
  border-top: 2px dotted #aaa;
}
.leaf .dash {
  width: 30px;
  margin-left: 8px;
}
.dot {
  width: 16px;
  height: 17px;
  margin-right: 14px;
  border-radius: 50%;
  background: radial-gradient(#9fd2ff, #3d8de6 70%);
  border: 1px solid #3b7cc9;
}
.play {
  margin-right: 15px;
  border: 8px solid transparent;
  border-left: 15px solid #3d9a3b;
  border-right: 0;
}
.splitter {
  height: 16px;
  display: flex;
  align-items: center;
  justify-content: center;
  background: linear-gradient(#cfd9ee, #c4d9fa);
}
.splitter i {
  width: 54px;
  border-top: 4px dotted #3c4d72;
}
.pane-tab {
  height: 48px;
  display: flex;
  align-items: center;
  gap: 4px;
  border-top: 2px solid #5d6b5e;
  border-bottom: 2px solid #8a7a4a;
  background: linear-gradient(#fdcf96, #fdb867 45%, #fca93c 50%, #fdd873);
  font-family: "Open Sans", sans-serif;
  font-size: 25px;
  font-weight: bold;
}
.pane-icons {
  height: 47px;
  display: flex;
  align-items: center;
  justify-content: flex-end;
  gap: 1px;
  padding-right: 6px;
  background: linear-gradient(#dbe8fe, #b3cffa 50%, #bcd6fd);
}
.more {
  margin-left: 12px;
}

.book {
  flex: 1;
  min-width: 0;
  display: flex;
  flex-direction: column;
}
.view {
  flex: 1;
  min-height: 0;
  display: flex;
}
.outline {
  width: 87px;
  display: flex;
  flex-direction: column;
  background: #dde1ee;
  border-right: 1px solid #9a9ca8;
}
.grip {
  height: 32px;
  margin: 590px 0 0 3px;
  border-left: 4px dotted #555c6c;
}
.outline button {
  width: 36px;
  height: 35px;
  margin: 46px 0 0 11px;
  border: 2px solid #7c8494;
  background: #e8ebf5;
  color: #000;
  font-size: 32px;
  font-weight: bold;
  line-height: 28px;
}
.sheet {
  flex: 1;
  min-width: 0;
  overflow: hidden;
  background: #fff;
  font-family: Lato, Calibri, sans-serif;
  font-size: 26px;
  color: #111;
}
.report-head {
  height: 133px;
  display: grid;
  grid-template-columns: 1fr auto 1fr;
  align-items: center;
  padding: 0 50px 4px 18px;
}
.report-head h3 {
  padding-top: 8px;
  font-size: 38px;
}
.brand {
  display: flex;
  align-items: center;
  gap: 20px;
}
.brand strong {
  font-family: "Open Sans", sans-serif;
  font-size: 43px;
  font-weight: 600;
}

/* Income statement */
.report {
  width: 100%;
  table-layout: fixed;
  border-collapse: separate;
  border-spacing: 0;
}
.c-label { width: 276px; }
.c-first { width: 214px; }
.c-end { width: 16px; }
.report tr {
  height: 38px;
}
.report .first {
  height: 44px;
}
.report .blank {
  height: 36px;
}
.report td, .report th {
  padding: 0;
  line-height: 32px;
  white-space: nowrap;
}
.report th {
  padding-left: 4px;
  overflow: hidden;
  text-align: left;
  font-weight: normal;
}
.report .param th, .report .total th, .report .section th, .total {
  font-weight: bold;
}
.section th {
  color: #2c5088;
}
.value {
  border: 2px solid #222;
  border-top: 0;
  text-align: center;
  font-weight: bold;
}
.first .value {
  border-top: 2px solid #222;
}
.head {
  text-align: center;
  font-weight: bold;
}
.num {
  text-align: right;
}
.report .num {
  padding-right: 15px;
}
.report .neg {
  padding-right: 7px;
  color: #e8343c;
}
.report .selected {
  position: relative;
  outline: 4px solid #111;
  outline-offset: -2px;
}
.selected i {
  position: absolute;
  right: -4px;
  bottom: -4px;
  width: 9px;
  height: 9px;
  background: #111;
  border: 1px solid #fff;
}
.rule > * + * {
  border-bottom: 2px solid #222;
}
.grey-rule > * + * {
  border-bottom: 3px solid #a3a3a3;
}
.thick-rule > * + * {
  border-bottom: 4px solid #111;
}

/* Sales chart */
.chart {
  margin: 55px 26px 0 276px;
  height: 660px;
  border: 2px solid #7577a0;
  background: linear-gradient(#8886c8, #a2a1db 120px, #ced5fc 330px);
}
.chart h3 {
  height: 116px;
  font-size: 46px;
  line-height: 108px;
  text-align: center;
}
.plot-wrap {
  display: flex;
  padding: 0 203px 0 13px;
}
.cats {
  width: 254px;
}
.cat {
  height: 41px;
  display: flex;
  align-items: center;
  justify-content: space-between;
  padding-right: 26px;
  border-top: 2px solid #8d90ad;
  background: rgba(160, 165, 200, 0.2);
}
.year {
  width: 80px;
  writing-mode: vertical-rl;
  transform: rotate(180deg);
  text-align: center;
  line-height: 35px;
}
.plot {
  flex: 1;
  border-right: 2px solid #999;
  background: repeating-linear-gradient(to right, transparent 0, transparent calc(100% / 6 - 2px), #8c8c90 calc(100% / 6 - 2px), #8c8c90 calc(100% / 6)), #fff;
}
.bar-row {
  height: 41px;
  display: flex;
  align-items: center;
  gap: 18px;
}
.bar {
  height: 17px;
  background: #4e7fbf;
  border: 1px solid #3d6aab;
  border-width: 2px 0;
}

/* Vertical scroll bar */
.vscroll {
  width: 38px;
  display: flex;
  flex-direction: column;
  background: #dcdfe9;
}
.vscroll button {
  height: 44px;
  display: flex;
  align-items: center;
  justify-content: center;
}
.vsplit {
  height: 12px;
  border: 2px solid #777a84;
  background: #fff;
}
.vtrack {
  flex: 1;
}
.vthumb {
  height: 434px;
  display: flex;
  align-items: center;
  justify-content: center;
  background: linear-gradient(to right, #fafafd, #dfe2ea);
  border: 2px solid #a2a6b2;
  border-radius: 3px;
}
.vthumb i {
  width: 14px;
  height: 10px;
  border: 2px solid #7d818c;
  border-width: 2px 0;
}
.tri {
  border: 10px solid transparent;
}
.tri.up { border-bottom: 13px solid #44474f; border-top: 0; }
.tri.down { border-top: 13px solid #44474f; border-bottom: 0; }
.tri.left { border-right: 13px solid #33363d; border-left: 0; }
.tri.right { border-left: 13px solid #33363d; border-right: 0; }

/* Sheet tabs */
.tab-row {
  height: 38px;
  display: flex;
  background: #dde1ea;
}
.tab-nav {
  display: flex;
  align-items: center;
  gap: 20px;
  padding: 0 0 0 18px;
  width: 155px;
}
.sheet-tabs {
  display: flex;
  flex: 1;
  font-size: 26px;
  line-height: 36px;
}
.sheet-tabs button {
  position: relative;
  height: 38px;
  padding: 0;
  text-align: left;
  white-space: nowrap;
  background: #e6e8ee;
  color: #33363d;
}
.sheet-tabs button::after {
  content: "";
  position: absolute;
  right: 0;
  top: 0;
  bottom: 0;
  border-right: 2px solid #a5a9b5;
  transform: skewX(-24deg);
}
.sheet-tabs .broadcast {
  width: 221px;
  text-align: center;
}
.sheet-tabs .active {
  width: 176px;
  padding-left: 14px;
  background: #fff;
  font-size: 29px;
  font-weight: bold;
}
.sheet-tabs .short {
  width: 58px;
  padding-left: 9px;
}
.sheet-tabs .qtr {
  width: 131px;
  padding-left: 13px;
}
.sheet-tabs .location {
  width: 190px;
  padding-left: 17px;
}
.sheet-tabs .new {
  width: 58px;
  padding-left: 8px;
}
.pointer {
  position: absolute;
  left: 18px;
  top: -14px;
  z-index: 2;
}
.hscroll {
  width: 992px;
  display: flex;
  align-items: center;
  padding-right: 38px;
}
.hsplit {
  width: 16px;
  height: 36px;
  border: 2px solid #8a8d97;
  background: #fff;
}
.hscroll button {
  width: 40px;
  display: flex;
  justify-content: center;
}
.htrack {
  flex: 1;
}
.hthumb {
  width: 38px;
  height: 36px;
  display: flex;
  align-items: center;
  justify-content: center;
  background: #f1f3f8;
  border: 2px solid #b5b9c5;
  border-radius: 3px;
}
.hthumb i {
  width: 9px;
  height: 12px;
  border: 2px solid #8a8d97;
  border-width: 0 2px;
}

/* Status bar */
.status {
  height: 47px;
  flex: none;
  display: flex;
  align-items: center;
  padding-right: 6px;
  border-top: 3px solid #9698a0;
  background: linear-gradient(#e2e4e9, #c2c4cb);
  color: #3a3d44;
}
.ready {
  width: 92px;
  padding-left: 12px;
  border-right: 2px solid #a9abb3;
}
.macro {
  width: 68px;
  height: 42px;
  padding-left: 15px;
  border-right: 2px solid #8e9098;
}
.views {
  margin-left: auto;
  display: flex;
  align-items: center;
  gap: 4px;
  padding-left: 6px;
  border-left: 2px solid #a0a2aa;
}
.views button + button {
  width: 38px;
}
.views .on {
  width: 43px;
  height: 43px;
  display: flex;
  align-items: center;
  justify-content: center;
  background: #fbe06a;
  border: 2px solid #d5aa3f;
}
.zoom-value {
  width: 88px;
  padding-right: 10px;
  text-align: center;
}
.round {
  width: 36px;
  height: 36px;
  flex: none;
  border: 2px solid #777a84;
  border-radius: 50%;
  background: #f7f8fa;
  font-size: 30px;
  font-weight: bold;
  line-height: 28px;
}
.status input {
  width: 224px;
  height: 36px;
  margin: 0;
  appearance: none;
  background: linear-gradient(#8a8d97, #8a8d97) center / 100% 2px no-repeat;
}
.status input::-webkit-slider-thumb {
  appearance: none;
  width: 18px;
  height: 28px;
  border: 2px solid #666973;
  border-radius: 2px 2px 9px 9px;
  background: #fff;
}
.taskbar {
  height: 5px;
  flex: none;
  display: flex;
  gap: 160px;
  padding-left: 246px;
  background: #a9adb4;
  overflow: hidden;
}
.taskbar i {
  width: 120px;
  border-top: 2px solid #83878e;
}
.taskbar i:first-child {
  width: 100px;
  margin-right: -160px;
}
.taskbar b {
  width: 32px;
  height: 32px;
  border-radius: 50%;
  background: #ececec;
}
```
